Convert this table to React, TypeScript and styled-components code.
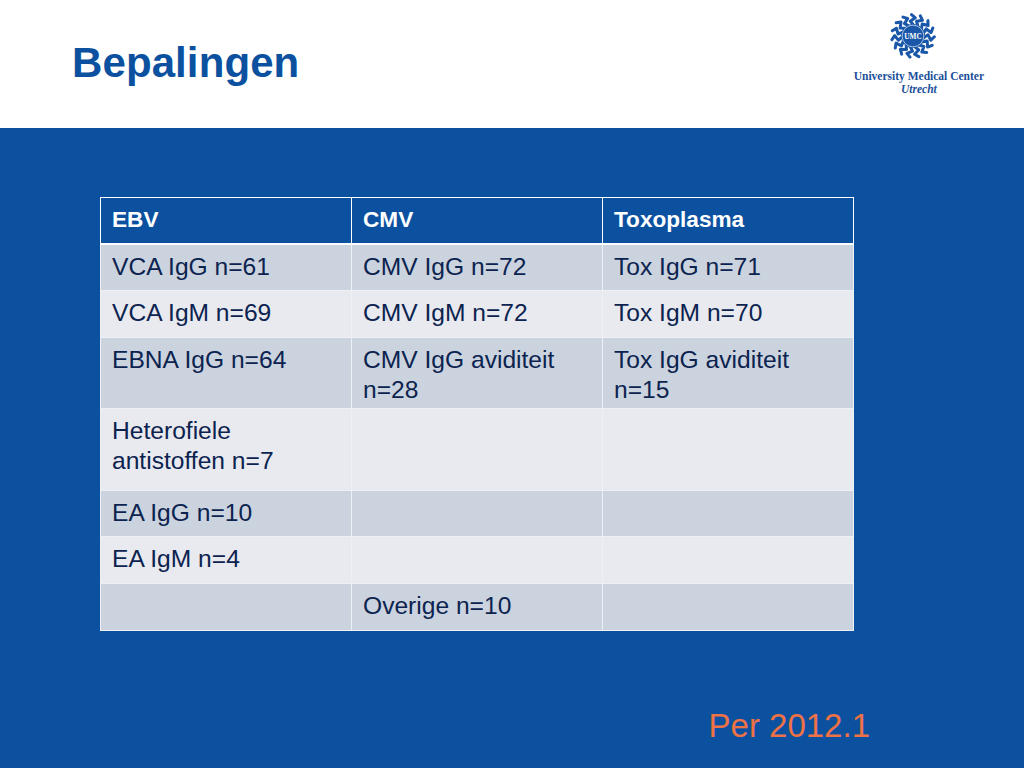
import React from "react";
import styled, { createGlobalStyle } from "styled-components";

const GlobalStyle = createGlobalStyle`
  html, body {
    margin: 0;
    padding: 0;
    background: #ffffff;
  }
`;

const rows: { cells: string[][]; height: number }[] = [
  { cells: [["VCA IgG n=61"], ["CMV IgG n=72"], ["Tox IgG n=71"]], height: 47 },
  { cells: [["VCA IgM n=69"], ["CMV IgM n=72"], ["Tox IgM n=70"]], height: 47 },
  { cells: [["EBNA IgG n=64"], ["CMV IgG aviditeit", "n=28"], ["Tox IgG aviditeit", "n=15"]], height: 71 },
  { cells: [["Heterofiele", "antistoffen n=7"], [], []], height: 82 },
  { cells: [["EA IgG n=10"], [], []], height: 46 },
  { cells: [["EA IgM n=4"], [], []], height: 47 },
  { cells: [[], ["Overige n=10"], []], height: 47 },
];

// UMC sunburst logo: zigzag spokes around a disc
const UmcMark: React.FC = () => {
  const spokes = Array.from({ length: 15 }, (_, i) => i * 24);
  return (
    <svg width="46" height="46" viewBox="-22 -22 44 44">
      {spokes.map((deg) => (
        <polyline
          key={deg}
          transform={`rotate(${deg})`}
          points="0,-11 -2.6,-14.2 2.2,-17.4 -1.4,-20.4"
          fill="none"
          stroke="#1a57a8"
          strokeWidth="2.9"
          strokeLinejoin="round"
          strokeLinecap="round"
        />
      ))}
      <circle r="11.5" fill="#1a57a8" />
      <circle r="10.4" fill="none" stroke="#ffffff" strokeWidth="0.6" />
      <text
        x="0"
        y="2.4"
        textAnchor="middle"
        fontFamily="'Liberation Serif', serif"
        fontWeight="bold"
        fontSize="7"
        fill="#ffffff"
      >
        UMC
      </text>
    </svg>
  );
};

const App: React.FC = () => {
  return (
    <>
      <GlobalStyle />
      <Slide>
        <Header>
          <Title>Bepalingen</Title>
          <Logo>
            <UmcMark />
            <LogoName>University Medical Center</LogoName>
            <LogoCity>Utrecht</LogoCity>
          </Logo>
        </Header>
        <Body>
          <Table>
            <thead>
              <tr>
                <HeadCell>EBV</HeadCell>
                <HeadCell>CMV</HeadCell>
                <HeadCell>Toxoplasma</HeadCell>
              </tr>
            </thead>
            <tbody>
              {rows.map((row, r) => (
                <Row key={r} $odd={r % 2 === 0} $height={row.height}>
                  {row.cells.map((lines, c) => (
                    <Cell key={c}>
                      {lines.map((l, i) => (
                        <div key={i}>{l}</div>
                      ))}
                    </Cell>
                  ))}
                </Row>
              ))}
            </tbody>
          </Table>
          <Footnote>Per 2012.1</Footnote>
        </Body>
      </Slide>
    </>
  );
};

const Slide = styled.div`
  width: 1024px;
  height: 768px;
  display: flex;
  flex-direction: column;
  font-family: "Liberation Sans", Arial, sans-serif;
  overflow: hidden;
`;

const Header = styled.div`
  height: 128px;
  background: #ffffff;
  display: flex;
  justify-content: space-between;
  align-items: flex-start;
  padding: 0 40px 0 72px;
  box-sizing: border-box;
`;

const Title = styled.h1`
  margin: 39px 0 0;
  font-size: 42px;
  font-weight: bold;
  color: #0b51a0;
  letter-spacing: 0.1px;
`;

const Logo = styled.div`
  margin-top: 13px;
  display: flex;
  flex-direction: column;
  align-items: center;
  font-family: "Liberation Serif", "Times New Roman", serif;
  color: #1a4f9a;
  font-weight: bold;

  svg {
    margin: 0 12px 11px 0;
  }
`;

const LogoName = styled.div`
  font-size: 11.5px;
  line-height: 13px;
`;

const LogoCity = styled.div`
  font-size: 11.5px;
  line-height: 13px;
  font-style: italic;
`;

const Body = styled.div`
  flex: 1;
  background: #0b51a0;
  display: flex;
  flex-direction: column;
  padding: 69px 0 0 100px;
  box-sizing: border-box;
`;

const Table = styled.table`
  width: 754px;
  border-collapse: collapse;
  table-layout: fixed;
  border: 1px solid #d9e1ec;
  font-size: 24.6px;
`;

const HeadCell = styled.th`
  height: 46px;
  box-sizing: border-box;
  background: #0b51a0;
  color: #ffffff;
  text-align: left;
  font-weight: bold;
  font-size: 22.6px;
  padding: 0 11px;
  border: 1px solid #ffffff;
  border-bottom: 2px solid #ffffff;
`;

const Row = styled.tr<{ $odd: boolean; $height: number }>`
  height: ${(p) => p.$height}px;
  background: ${(p) => (p.$odd ? "#cbd3df" : "#e8eaef")};
`;

const Cell = styled.td`
  vertical-align: top;
  padding: 7px 11px 0;
  color: #0c234f;
  line-height: 30px;
  border: 1px solid #edf0f4;
  box-sizing: border-box;
`;

const Footnote = styled.div`
  margin: auto 154px 23px auto;
  font-size: 33px;
  color: #ef7246;
`;

export default App;
